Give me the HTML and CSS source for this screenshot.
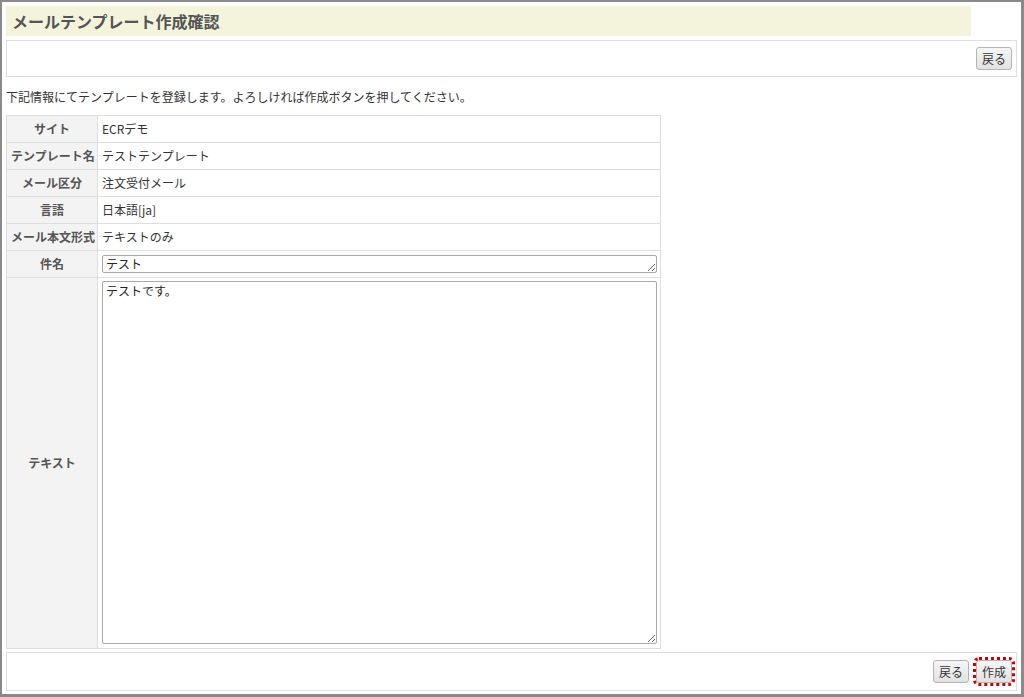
FILE: index.html
```html
<!DOCTYPE html>
<html lang="ja">
<head>
<meta charset="utf-8">
<title>メールテンプレート作成確認</title>
<link rel="stylesheet" href="styles.css">
</head>
<body>
<div class="frame">
  <h1 class="title">メールテンプレート作成確認</h1>
  <div class="bar">
    <button class="btn">戻る</button>
  </div>
  <p class="desc">下記情報にてテンプレートを登録します。よろしければ作成ボタンを押してください。</p>
  <table class="form">
    <tr><th>サイト</th><td>ECRデモ</td></tr>
    <tr><th>テンプレート名</th><td>テストテンプレート</td></tr>
    <tr><th>メール区分</th><td>注文受付メール</td></tr>
    <tr><th>言語</th><td>日本語[ja]</td></tr>
    <tr><th>メール本文形式</th><td>テキストのみ</td></tr>
    <tr><th>件名</th><td><textarea class="subject">テスト</textarea></td></tr>
    <tr class="body-row"><th>テキスト</th><td><textarea class="text">テストです。</textarea></td></tr>
  </table>
  <div class="bar bottom">
    <button class="btn">戻る</button>
    <button class="btn focus">作成</button>
  </div>
</div>
</body>
</html>
```

FILE: styles.css
```css
html, body {
  margin: 0;
  padding: 0;
  background: #fff;
}
body {
  font-family: "Noto Sans CJK JP", "Noto Sans", sans-serif;
  font-size: 12px;
  color: #333;
}
.frame {
  box-sizing: border-box;
  width: 1024px;
  height: 697px;
  border-style: solid;
  border-color: #8a8a8a;
  border-width: 2px 3px 3px 2px;
  padding: 4px;
  overflow: hidden;
}
.title {
  margin: 0;
  width: 965px;
  height: 30px;
  box-sizing: border-box;
  background: #f4f4dc;
  color: #555;
  font-size: 16px;
  font-weight: bold;
  line-height: 30px;
  padding-left: 6px;
  margin-bottom: 4px;
}
.bar {
  box-sizing: border-box;
  height: 37px;
  border: 1px solid #dedede;
  display: flex;
  justify-content: flex-end;
  align-items: center;
  gap: 7px;
  padding-right: 4px;
}
.bar.bottom {
  height: 39px;
  margin-top: 3px;
}
.btn {
  box-sizing: border-box;
  height: 23px;
  padding: 0 5px;
  border: 1px solid #b4b4b4;
  border-radius: 3px;
  background: linear-gradient(#f6f6f6, #e2e2e2);
  font-family: "Noto Sans CJK JP", sans-serif;
  font-size: 12px;
  color: #333;
  line-height: 20px;
}
.btn.focus {
  outline: 3px dotted #cc0000;
  outline-offset: 0px;
}
.desc {
  margin: 12px 0 10px 0;
  line-height: 16px;
  font-size: 12px;
  color: #333;
}
.form {
  border-collapse: collapse;
  width: 655px;
  table-layout: fixed;
}
.form th, .form td {
  border: 1px solid #dedede;
  height: 26px;
  padding: 0 3px 0 4px;
  line-height: 16px;
}
.form th {
  width: 82px;
  padding: 0 4px;
  background: #f3f3f3;
  color: #555;
  font-weight: bold;
  text-align: center;
  white-space: nowrap;
}
.form td {
  text-align: left;
  color: #333;
}
.form textarea {
  display: block;
  box-sizing: border-box;
  width: 555px;
  margin: 0;
  border: 1px solid #a9a9a9;
  border-radius: 2px;
  font-family: "Noto Sans CJK JP", sans-serif;
  font-size: 12px;
  color: #222;
  padding: 0 3px;
  line-height: 15px;
}
.form .subject {
  height: 18px;
  overflow: hidden;
}
.body-row th, .body-row td {
  height: 363px;
}
.body-row td {
  padding-top: 3px;
  padding-bottom: 4px;
  vertical-align: top;
}
.form .text {
  height: 363px;
  padding-top: 1px;
}
```
